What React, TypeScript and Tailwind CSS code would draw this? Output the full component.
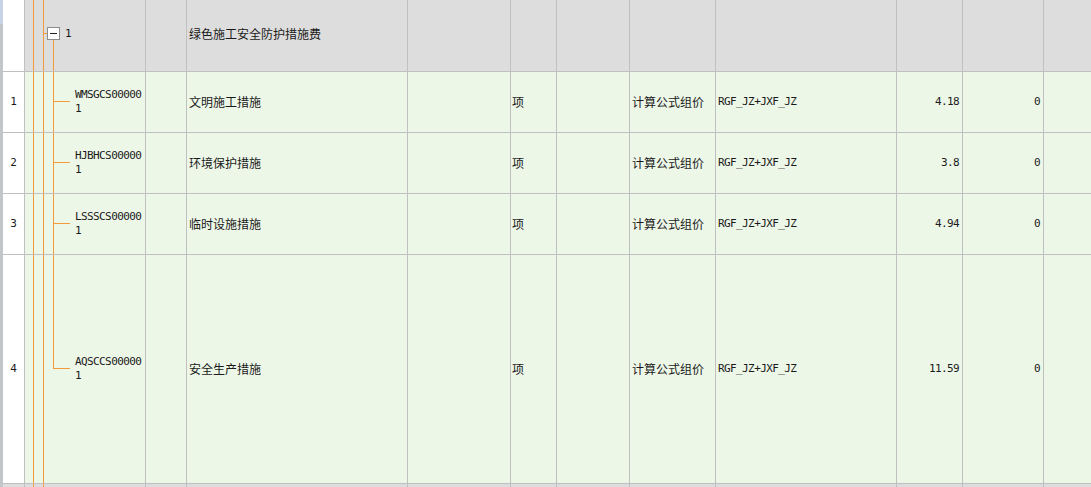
import clsx from "clsx";

type Item = {
  no: string;
  code: string;
  name: string;
  unit: string;
  method: string;
  formula: string;
  rate: string;
  amount: string;
  h: number;
  hClass: string;
  last?: boolean;
};

const items: Item[] = [
  { no: "1", code: "WMSGCS00000", name: "文明施工措施", unit: "项", method: "计算公式组价", formula: "RGF_JZ+JXF_JZ", rate: "4.18", amount: "0", h: 61, hClass: "h-[61px]" },
  { no: "2", code: "HJBHCS00000", name: "环境保护措施", unit: "项", method: "计算公式组价", formula: "RGF_JZ+JXF_JZ", rate: "3.8", amount: "0", h: 61, hClass: "h-[61px]" },
  { no: "3", code: "LSSSCS00000", name: "临时设施措施", unit: "项", method: "计算公式组价", formula: "RGF_JZ+JXF_JZ", rate: "4.94", amount: "0", h: 61, hClass: "h-[61px]" },
  { no: "4", code: "AQSCCS00000", name: "安全生产措施", unit: "项", method: "计算公式组价", formula: "RGF_JZ+JXF_JZ", rate: "11.59", amount: "0", h: 229, hClass: "h-[229px]", last: true },
];

const ORANGE = "#f39a3c";
const cjk = "font-['SimSun','Noto_Sans_CJK_SC',sans-serif] text-[12px] text-[#1a1a1a]";
const mono = "font-['DejaVu_Sans_Mono',monospace] text-[10px] text-[#1a1a1a]";

function Cell({ className, children }: { className?: string; children?: React.ReactNode }) {
  return (
    <div className={clsx("flex items-center overflow-hidden border-r border-b border-[#c0c0c0]", className)}>
      {children}
    </div>
  );
}

function Guides({ h, width }: { h: number; width: number }) {
  return (
    <svg width={width} height={h} className="shrink-0">
      <line x1={8.5} y1={0} x2={8.5} y2={h} stroke={ORANGE} />
      <line x1={18.5} y1={0} x2={18.5} y2={h} stroke={ORANGE} />
    </svg>
  );
}

function HeaderTree() {
  const h = 71;
  return (
    <svg width={40} height={h} className="shrink-0">
      <line x1={8.5} y1={0} x2={8.5} y2={h} stroke={ORANGE} />
      <line x1={18.5} y1={0} x2={18.5} y2={h} stroke={ORANGE} />
      <line x1={18.5} y1={33.5} x2={22} y2={33.5} stroke={ORANGE} />
      <line x1={28.5} y1={40} x2={28.5} y2={h} stroke={ORANGE} />
      <rect x={22.5} y={27.5} width={12} height={12} fill="#ffffff" stroke="#8c8c8c" />
      <line x1={25} y1={33.5} x2={32} y2={33.5} stroke="#222222" />
    </svg>
  );
}

function ChildTree({ h, last }: { h: number; last?: boolean }) {
  const mid = Math.floor(h / 2) - 0.5;
  return (
    <svg width={50} height={h} className="shrink-0">
      <line x1={8.5} y1={0} x2={8.5} y2={h} stroke={ORANGE} />
      <line x1={18.5} y1={0} x2={18.5} y2={h} stroke={ORANGE} />
      <line x1={28.5} y1={0} x2={28.5} y2={last ? mid + 0.5 : h} stroke={ORANGE} />
      <line x1={28.5} y1={mid} x2={45} y2={mid} stroke={ORANGE} />
    </svg>
  );
}

export default function App() {
  return (
    <div className="flex h-[487px] w-[1091px] overflow-hidden bg-white">
      <div className="flex w-[3px] shrink-0 flex-col">
        <div className="h-[24px] bg-[#c9d3e6]" />
        <div className="flex-1 bg-[#c2c5ca]" />
      </div>
      <div className="flex flex-col">
        {/* group header */}
        <div className="grid h-[72px] grid-cols-[22px_121px_41px_221px_103px_46px_73px_86px_181px_66px_81px_47px]">
          <Cell className="bg-white" />
          <Cell className="items-start bg-[#dddddd]">
            <HeaderTree />
            <span className={clsx(mono, "mt-[26px] text-[11px]")}>1</span>
          </Cell>
          <Cell className="bg-[#dddddd]" />
          <Cell className="bg-[#dddddd] pb-[4px] pl-[2px]">
            <span className={cjk}>绿色施工安全防护措施费</span>
          </Cell>
          <Cell className="bg-[#dddddd]" />
          <Cell className="bg-[#dddddd]" />
          <Cell className="bg-[#dddddd]" />
          <Cell className="bg-[#dddddd]" />
          <Cell className="bg-[#dddddd]" />
          <Cell className="bg-[#dddddd]" />
          <Cell className="bg-[#dddddd]" />
          <Cell className="border-r-0 bg-[#dddddd]" />
        </div>

        {items.map((it) => (
          <div
            key={it.no}
            className={clsx(
              "grid grid-cols-[22px_121px_41px_221px_103px_46px_73px_86px_181px_66px_81px_47px] bg-[#edf7e8]",
              it.hClass
            )}
          >
            <Cell className="justify-center bg-white">
              <span className={clsx(mono, "text-[11px]")}>{it.no}</span>
            </Cell>
            <Cell>
              <ChildTree h={it.h - 1} last={it.last} />
              <div className={clsx(mono, "flex flex-col text-[11px] leading-[14px] tracking-[-0.6px]")}>
                <span>{it.code}</span>
                <span>1</span>
              </div>
            </Cell>
            <Cell />
            <Cell className="pl-[2px]">
              <span className={cjk}>{it.name}</span>
            </Cell>
            <Cell />
            <Cell className="pl-[1px]">
              <span className={cjk}>{it.unit}</span>
            </Cell>
            <Cell />
            <Cell className="pl-[2px]">
              <span className={cjk}>{it.method}</span>
            </Cell>
            <Cell className="pl-[2px]">
              <span className={clsx(mono, "text-[11px] tracking-[-0.6px]")}>{it.formula}</span>
            </Cell>
            <Cell className="justify-end pr-[3px]">
              <span className={clsx(mono, "text-[11px] tracking-[-0.6px]")}>{it.rate}</span>
            </Cell>
            <Cell className="justify-end pr-[3px]">
              <span className={clsx(mono, "text-[11px] tracking-[-0.6px]")}>{it.amount}</span>
            </Cell>
            <Cell className="border-r-0" />
          </div>
        ))}

        {/* partial next row at the bottom edge */}
        <div className="grid h-[4px] grid-cols-[22px_121px_41px_221px_103px_46px_73px_86px_181px_66px_81px_47px] bg-[#dddddd]">
          <div className="border-r border-[#c0c0c0]" />
          <div className="overflow-hidden border-r border-[#c0c0c0]">
            <Guides h={4} width={40} />
          </div>
          <div className="border-r border-[#c0c0c0]" />
          <div className="border-r border-[#c0c0c0]" />
          <div className="border-r border-[#c0c0c0]" />
          <div className="border-r border-[#c0c0c0]" />
          <div className="border-r border-[#c0c0c0]" />
          <div className="border-r border-[#c0c0c0]" />
          <div className="border-r border-[#c0c0c0]" />
          <div className="border-r border-[#c0c0c0]" />
          <div className="border-r border-[#c0c0c0]" />
          <div />
        </div>
      </div>
    </div>
  );
}
